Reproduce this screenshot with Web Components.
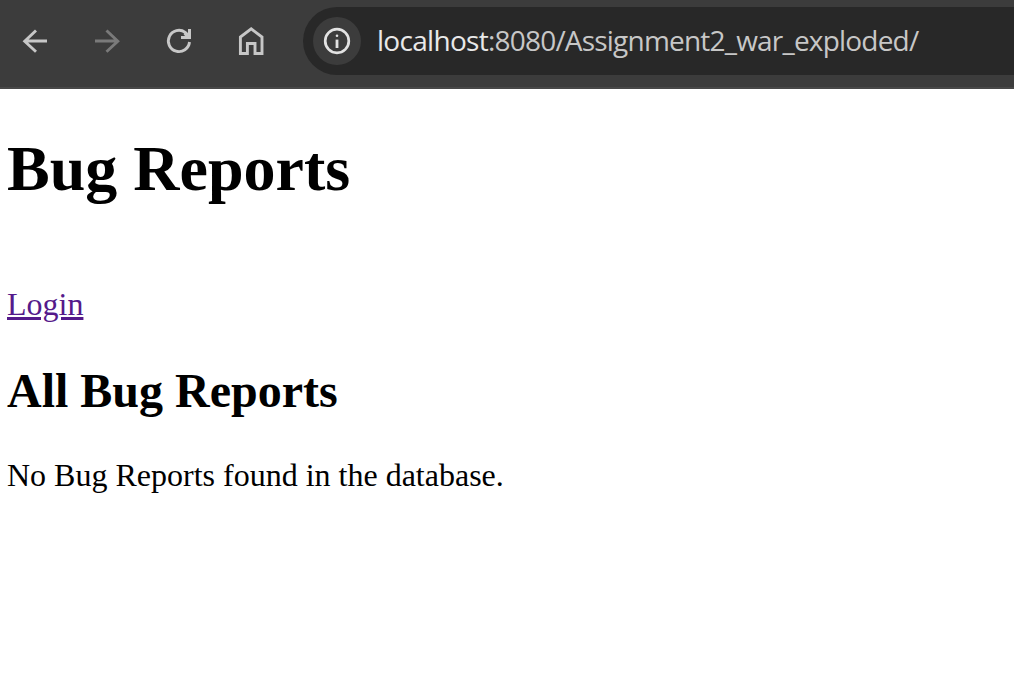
<!DOCTYPE html>
<html lang="en">
<head>
<meta charset="utf-8">
<title>Bug Reports</title>
<style>
html, body { margin: 0; height: 100%; overflow: hidden; background: #fff; }
</style>
</head>
<body>
<browser-window>
  <browser-toolbar slot="toolbar">
    <nav-icon name="back"></nav-icon>
    <nav-icon name="forward"></nav-icon>
    <nav-icon name="reload"></nav-icon>
    <nav-icon name="home"></nav-icon>
    <address-bar slot="address"><span slot="host">localhost</span><span slot="path">:8080/Assignment2_war_exploded/</span></address-bar>
  </browser-toolbar>
  <bug-reports-page>No Bug Reports found in the database.</bug-reports-page>
</browser-window>
<script>
class BaseElement extends HTMLElement {
  constructor() {
    super();
    this.attachShadow({ mode: 'open' }).innerHTML = this.template();
  }
}

customElements.define('browser-window', class extends BaseElement {
  template() {
    return `<style>
      :host { display: flex; flex-direction: column; height: 100vh; background: #fff; overflow: hidden; }
    </style><slot name="toolbar"></slot><slot></slot>`;
  }
});

customElements.define('browser-toolbar', class extends BaseElement {
  template() {
    return `<style>
      :host { display: flex; align-items: flex-start; flex: none; box-sizing: border-box; height: 89px;
        padding-top: 7px; background: #3c3c3c; border-bottom: 2px solid #484848; }
      nav { display: flex; width: 303px; flex: none; }
    </style><nav><slot></slot></nav><slot name="address"></slot>`;
  }
});

/* Each glyph is drawn in a 72x68 cell. */
const ICONS = {
  back: '<path d="M47 34H25M36 23.5L24.7 34.2L36 44.8"/>',
  forward: '<path d="M23 34H45M34.5 23.5L45.8 34.2L34.5 44.8"/>',
  reload: '<path d="M45.5 35A10.6 10.6 0 1 1 41.2 25.4L43.5 27.6"/><path d="M44 22H47V32H37V29H41L39.5 27L42 24.7L44 26.8Z" fill="currentColor" stroke="none"/>',
  home: '<path d="M24.4 46.5V30L35.2 21.9L46 30V46.5H39V36.5H31.4V46.5Z"/>'
};

customElements.define('nav-icon', class extends HTMLElement {
  connectedCallback() {
    const name = this.getAttribute('name');
    const root = this.shadowRoot || this.attachShadow({ mode: 'open' });
    root.innerHTML = `<style>
      :host { display: block; width: 72px; height: 68px; flex: none; color: #c7c7c7; }
      :host([name="forward"]) { color: #7a7a7a; }
      svg { display: block; fill: none; stroke: currentColor; stroke-width: 2.9; }
    </style><svg width="72" height="68" viewBox="0 0 72 68">${ICONS[name]}</svg>`;
  }
});

customElements.define('address-bar', class extends BaseElement {
  template() {
    return `<style>
      :host { display: flex; align-items: center; flex: 1; box-sizing: border-box; height: 68px;
        padding-left: 10px; border-radius: 34px 0 0 34px; background: #282828; }
      .info { display: flex; width: 48px; height: 48px; flex: none; border-radius: 50%; background: #3c3c3c; }
      .url { margin: 0 0 2px 16px; white-space: nowrap; color: #c7c7c7;
        font: 28px/40px "Open Sans", "Noto Sans", sans-serif; letter-spacing: -0.8px; }
      .host { color: #e9e9e9; letter-spacing: -0.7px; }
    </style>
    <span class="info"><svg width="48" height="48" viewBox="0 0 48 48" fill="none" stroke="#e3e3e3">
      <circle cx="24" cy="24" r="11.8" stroke-width="2.7"/>
      <path d="M24 22.6V31" stroke-width="2.8"/><circle cx="24" cy="18.7" r="1.3" fill="#e3e3e3" stroke="none"/>
    </svg></span>
    <span class="url"><span class="host"><slot name="host"></slot></span><slot name="path"></slot></span>`;
  }
});

customElements.define('bug-reports-page', class extends BaseElement {
  template() {
    return `<style>
      :host { display: block; padding: 43px 7px 0; color: #000;
        font: 32px/36px "Liberation Serif", "Times New Roman", serif; }
      h1 { margin: 0; font-size: 64px; line-height: 74px; }
      a { display: block; width: max-content; margin-top: 80px; color: #551a8b; text-decoration: underline; text-decoration-thickness: 3px; text-underline-offset: 2px; }
      h2 { margin: 42px 0 0; font-size: 48px; line-height: 54px; }
      p { margin: 39px 0 0; }
    </style>
    <h1>Bug Reports</h1>
    <a href="#">Login</a>
    <h2>All Bug Reports</h2>
    <p><slot></slot></p>`;
  }
});
</script>
</body>
</html>
